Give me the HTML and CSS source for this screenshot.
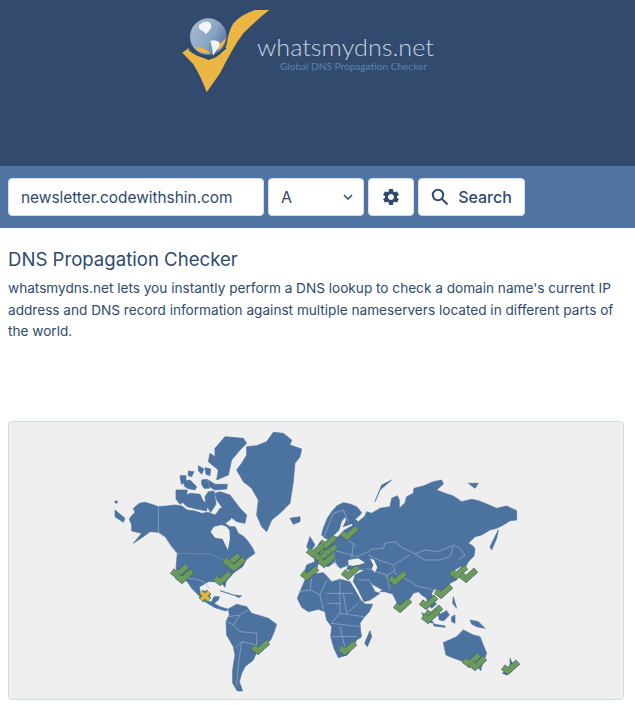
FILE: index.html
```html
<!DOCTYPE html>
<html lang="en">
<head>
    <meta charset="UTF-8">
    <meta name="viewport" content="width=device-width, initial-scale=1.0">
    <title>DNS Propagation Checker</title>
    <link rel="stylesheet" href="styles.css">
</head>
<body>
    <div class="header">
        <svg class="logo" width="265" height="100" viewBox="175 5 265 100">
            <defs>
                <linearGradient id="globe-shade" x1="0" y1="0" x2="1" y2="0.6">
                    <stop offset="0" stop-color="#a9bcd0"/>
                    <stop offset="0.65" stop-color="#8ba5c2"/>
                    <stop offset="1" stop-color="#5679a3"/>
                </linearGradient>
            </defs>
            <g transform="translate(175,5) scale(0.3333)">
                <path class="logo-check" d="M22 143L40 130Q60 150 100 165Q135 160 155 120Q160 80 175 55Q200 28 240 15L283 15Q250 40 205 85Q175 125 135 205L95 262Q78 215 55 178Z"/>
                <path class="logo-band" d="M45 130Q95 175 150 125"/>
                <circle class="logo-globe" cx="100" cy="95" r="55"/>
                <path class="logo-yellow" d="M58 125Q80 150 105 143Q95 128 58 125ZM132 118L153 100Q148 125 128 138Z"/>
                <path class="logo-land" d="M72 60Q85 48 100 50Q112 55 108 70Q100 82 92 88Q88 78 78 75Q70 72 72 60ZM106 108Q118 102 132 110Q137 122 125 135L114 152Q112 125 106 108Z"/>
            </g>
            <text class="logo-name" x="257" y="56" textLength="177" lengthAdjust="spacingAndGlyphs">whatsmydns.net</text>
            <text class="logo-tag" x="280" y="70" textLength="147" lengthAdjust="spacingAndGlyphs">Global DNS Propagation Checker</text>
        </svg>
    </div>

    <form class="search-bar">
        <input class="field domain" type="text" value="newsletter.codewithshin.com">
        <div class="type-select">
            <select class="field">
                <option>A</option>
            </select>
            <svg class="chevron" width="10" height="6" viewBox="0 0 10 6"><path d="M1 1L5 5L9 1"/></svg>
        </div>
        <button class="btn gear" type="button">
            <svg width="20" height="20" viewBox="0 0 24 24"><path d="M19.14 12.94c.04-.3.06-.61.06-.94 0-.32-.02-.64-.07-.94l2.03-1.58a.49.49 0 0 0 .12-.61l-1.92-3.32a.49.49 0 0 0-.59-.22l-2.39.96c-.5-.38-1.03-.7-1.62-.94l-.36-2.54a.48.48 0 0 0-.48-.41h-3.84c-.24 0-.43.17-.47.41l-.36 2.54c-.59.24-1.13.57-1.62.94l-2.39-.96c-.22-.08-.47 0-.59.22L2.74 8.87c-.12.21-.08.47.12.61l2.03 1.58c-.05.3-.09.63-.09.94s.02.64.07.94l-2.03 1.58a.49.49 0 0 0-.12.61l1.92 3.32c.12.22.37.29.59.22l2.39-.96c.5.38 1.03.7 1.62.94l.36 2.54c.05.24.24.41.48.41h3.84c.24 0 .44-.17.47-.41l.36-2.54c.59-.24 1.13-.56 1.62-.94l2.39.96c.22.08.47 0 .59-.22l1.92-3.32c.12-.22.07-.47-.12-.61l-2.01-1.58zM12 15.6c-1.98 0-3.6-1.62-3.6-3.6s1.62-3.6 3.6-3.6 3.6 1.62 3.6 3.6-1.62 3.6-3.6 3.6z"/></svg>
        </button>
        <button class="btn search" type="submit">
            <svg width="18" height="18" viewBox="0 0 18 18"><circle cx="7" cy="7" r="5.2"/><path d="M11 11L16.5 16.5"/></svg>
            Search
        </button>
    </form>

    <div class="intro">
        <h1>DNS Propagation Checker</h1>
        <p>whatsmydns.net lets you instantly perform a DNS lookup to check a domain name's current IP address and DNS record information against multiple nameservers located in different parts of the world.</p>
    </div>

    <div class="map-card">
        <svg class="map" width="614" height="277" viewBox="9 422 614 277">
            <defs>
                <g id="ok">
                    <path class="mark-edge" d="M-7 0L-2 4L8 -5"/>
                    <path class="mark-ok" d="M-7 0L-2 4L8 -5"/>
                </g>
                <g id="bad">
                    <path class="mark-edge" d="M-4 -4L4 4M4 -4L-4 4"/>
                    <path class="mark-ok" d="M-4 -4L4 4M4 -4L-4 4"/>
                    <path class="mark-bad" d="M-4 -4L4 4M4 -4L-4 4"/>
                </g>
            </defs>

            <!-- americas -->
            <g transform="translate(100,425) scale(0.3333)">
                <path class="land" d="M88 282L95 272L105 262L100 250L118 235L135 232L155 238L175 245L200 243L225 240L245 243L262 255L285 258L305 265L325 262L345 270L352 262L360 250L385 245L395 255L400 270L390 285L375 295L390 305L405 305L415 325L432 335L445 350L458 370L465 385L450 395L438 405L428 425L405 440L390 455L378 470L375 487L368 478L365 465L345 470L325 470L308 480L298 485L302 510L315 528L335 530L342 515L358 515L355 525L342 535L360 545L385 553L378 558L345 548L315 530L295 510L275 490L262 470L240 455L228 430L232 385L215 365L195 335L175 322L150 320L130 335L100 355L125 325L95 318L95 300Z"/>
                <path class="water" d="M332 320L342 305L365 300L380 305L388 315L390 340L384 375L375 358L368 342L345 338Z"/>
                <path class="land" d="M440 65L470 62L500 50L520 22L550 25L575 45L570 60L605 72L600 95L585 115L580 170L570 235L545 260L515 285L500 320L485 305L470 270L475 225L455 190L430 170L410 135L425 115L440 90Z"/>
                <path class="land" d="M345 70L375 35L430 40L440 55L420 75L395 105L385 150L350 165L355 135L325 110L330 85L345 95Z"/>
                <path class="land" d="M345 205L360 200L390 210L420 250L440 270L435 295L410 290L385 270L365 245L350 225Z"/>
                <path class="land" d="M228 195L262 195L258 225L240 238L228 222ZM248 215L270 205L300 208L308 225L322 240L320 258L290 252L262 245L250 235ZM255 168L270 165L290 185L285 195L262 190L252 182ZM240 152L258 152L258 172L244 178ZM265 138L282 140L275 155L265 152ZM295 122L312 132L305 148L296 138ZM315 128L332 132L330 152L318 148ZM305 165L322 163L328 190L312 190L305 178ZM325 165L345 178L382 178L380 192L345 195L328 185ZM325 200L342 198L348 238L332 262L318 240L315 215ZM570 280L600 275L600 290L580 298ZM45 255L75 280L70 292L45 275ZM45 228L52 228L52 234L45 234ZM360 497L400 510L415 515L385 505ZM405 510L425 513L415 518Z"/>
                <path class="land" d="M378 590L388 570L385 552L410 538L440 545L455 565L480 572L505 580L530 598L522 622L512 645L490 665L470 682L460 705L435 725L425 745L418 770L428 798L412 798L398 775L398 735L405 690L400 665L380 630Z"/>
                <path class="border" d="M175 245L175 322L195 335L215 365L232 385M262 460L285 462L310 470L330 490M385 575L420 570L445 555M420 570L400 600L420 620L470 625L470 680M400 600L380 590M405 670L425 650L470 660M425 650L415 720L410 780"/>
                <path class="border dotted" d="M235 385L330 387L370 405L385 400"/>
            </g>

            <!-- europe, africa, asia, oceania -->
            <g transform="translate(290,480) scale(0.3333)">
                <path class="land" d="M95 165L100 145L112 115L125 95L140 78L160 68L180 72L200 80L215 98L207 108L195 118L205 125L225 108L230 95L245 100L270 85L300 80L305 55L322 47L328 60L328 85L345 68L350 50L370 40L372 25L400 18L430 5L455 0L460 12L440 30L465 40L490 48L515 65L545 58L565 62L590 72L620 85L650 78L680 92L680 120L660 122L640 135L620 145L600 150L575 165L555 170L535 190L545 195L555 205L552 228L535 245L525 265L510 260L495 270L490 285L500 300L480 310L470 330L455 345L445 340L435 325L425 340L432 365L440 372L425 385L415 375L410 355L395 345L385 335L370 340L360 355L348 382L335 392L322 370L308 342L285 335L270 335L278 330L250 315L238 302L255 335L270 340L240 360L222 365L205 330L190 305L195 285L225 270L195 268L170 270L175 255L150 265L135 245L115 260L100 255L85 250L80 270L60 290L40 285L50 255L75 245L70 225L80 205L105 195L125 180L105 175Z"/>
                <path class="water" d="M130 168L148 150L155 125L165 112L168 120L158 142L185 132L188 136L162 150L143 170ZM175 240L205 235L225 248L205 255L190 258L175 255ZM240 235L252 240L262 262L255 278L245 268L250 255Z"/>
                <path class="land" d="M22 355L45 300L70 282L100 278L112 290L125 305L150 298L180 305L195 330L212 360L225 372L248 373L238 395L222 412L210 430L212 455L215 470L200 480L190 500L172 525L145 533L132 505L122 470L125 440L110 420L105 395L85 388L55 395L35 382Z"/>
                <path class="land" d="M240 452L245 470L232 500L224 490ZM60 170L75 195L60 215L50 200ZM5 118L30 115L15 130ZM255 65L275 15L305 0L270 30ZM535 10L565 10L555 25ZM600 200L625 150L620 175L605 210ZM395 398L415 410L432 430L422 428L400 410ZM445 405L470 392L478 405L462 422L448 420ZM540 420L565 425L585 445L560 440L545 432ZM430 432L465 438L465 442L432 438ZM485 410L495 405L495 430L485 425ZM490 350L500 385L488 370ZM565 563L575 563L572 572Z"/>
                <path class="land" d="M460 488L500 470L520 450L550 465L570 470L590 520L575 560L550 565L520 545L480 530L468 525Z"/>
                <path class="land" d="M660 535L675 565L650 585L637 580L660 560Z"/>
                <path class="border" d="M100 175L130 100L160 90L175 125M25 335L60 330L90 345L110 300M60 330L65 295M90 345L100 388M110 340L190 340M150 300L150 400L125 430M150 400L220 410M125 470L200 470M160 340L170 400M110 370L150 370M125 430L210 440M170 400L205 370M150 440L170 525M235 215L245 208L280 205L285 190L315 185L340 205L375 222L405 210L445 215L480 200L490 195L510 205L525 225L505 240M375 222L405 240L450 240L480 230L490 200M235 225L265 240L310 255L360 225M310 255L315 280L345 295L385 320L415 325L440 335M285 290L310 275M230 265L290 285L300 330M205 300L240 300M130 210L200 230L235 215M150 160L200 200M90 210L130 250M130 215L140 260M190 190L185 235"/>
            </g>

            <use href="#ok" x="179" y="571"/>
            <use href="#ok" x="184" y="576"/>
            <use href="#ok" x="231" y="560"/>
            <use href="#ok" x="236" y="564"/>
            <use href="#ok" x="222" y="578"/>
            <use href="#ok" x="260" y="647"/>
            <use href="#bad" x="205" y="596"/>
            <use href="#ok" x="349" y="533"/>
            <use href="#ok" x="327" y="542"/>
            <use href="#ok" x="315" y="550"/>
            <use href="#ok" x="328" y="551"/>
            <use href="#ok" x="322" y="555"/>
            <use href="#ok" x="326" y="560"/>
            <use href="#ok" x="309" y="573"/>
            <use href="#ok" x="350" y="572"/>
            <use href="#ok" x="397" y="578"/>
            <use href="#ok" x="458" y="572"/>
            <use href="#ok" x="468" y="575"/>
            <use href="#ok" x="443" y="591"/>
            <use href="#ok" x="428" y="602"/>
            <use href="#ok" x="402" y="605"/>
            <use href="#ok" x="433" y="612"/>
            <use href="#ok" x="430" y="616"/>
            <use href="#ok" x="347" y="648"/>
            <use href="#ok" x="471" y="660"/>
            <use href="#ok" x="477" y="663"/>
            <use href="#ok" x="510" y="667"/>
        </svg>
    </div>
</body>
</html>
```

FILE: styles.css
```css
body {
    margin: 0;
    font-family: 'Inter', 'Liberation Sans', sans-serif;
    color: #2f4a6d;
    background-color: #ffffff;
}
.header {
    height: 166px;
    background-color: #324a6d;
    padding-left: 175px;
    padding-top: 5px;
    box-sizing: border-box;
}
.logo {
    display: block;
}
.logo-check {
    fill: #ebb644;
}
.logo-band {
    fill: none;
    stroke: #324a6d;
    stroke-width: 14;
}
.logo-globe {
    fill: url(#globe-shade);
}
.logo-yellow {
    fill: #ebb644;
}
.logo-land {
    fill: #f2f5f8;
}
.logo-name {
    font-family: 'Lato', sans-serif;
    font-weight: 300;
    font-size: 24px;
    fill: #c6d4e2;
}
.logo-tag {
    font-family: 'Lato', sans-serif;
    font-size: 9px;
    fill: #5b82b0;
}
.search-bar {
    display: flex;
    gap: 4px;
    height: 62px;
    box-sizing: border-box;
    margin: 0;
    padding: 12px 8px;
    background-color: #4f74a1;
}
.field,
.btn {
    height: 38px;
    box-sizing: border-box;
    border: 1px solid #d5dde6;
    border-radius: 4px;
    background-color: #ffffff;
    color: #2f4a6d;
    font-family: inherit;
    font-size: 16px;
}
.domain {
    width: 256px;
    padding: 0 12px;
    font-size: 15.4px;
}
.type-select {
    position: relative;
    width: 96px;
}
.type-select select {
    width: 100%;
    padding: 0 12px;
    appearance: none;
}
.chevron {
    position: absolute;
    right: 11px;
    top: 16px;
}
.chevron path {
    fill: none;
    stroke: #2f4a6d;
    stroke-width: 1.5;
}
.btn {
    display: flex;
    align-items: center;
    justify-content: center;
    font-weight: 500;
}
.gear {
    width: 46px;
    padding: 0;
}
.gear svg {
    fill: #2f4a6d;
}
.search {
    width: 107px;
    gap: 9px;
    padding: 0;
}
.search svg {
    fill: none;
    stroke: #2f4a6d;
    stroke-width: 2;
}
.intro {
    padding: 0 8px;
    height: 193px;
}
.intro h1 {
    margin: 0;
    padding-top: 19px;
    font-size: 18.6px;
    line-height: 24px;
    font-weight: 400;
}
.intro p {
    margin: 7px 0 0;
    font-size: 13.62px;
    line-height: 21.5px;
}
.map-card {
    width: 616px;
    height: 279px;
    margin-left: 8px;
    box-sizing: border-box;
    border: 1px solid #d3d9e0;
    border-radius: 4px;
    background-color: #efefef;
}
.map {
    display: block;
}
.land {
    fill: #4c72a0;
    stroke: #4c72a0;
    stroke-width: 2;
    stroke-linejoin: round;
}
.water {
    fill: #efefef;
}
.border {
    fill: none;
    stroke: #9db1c8;
    stroke-width: 2;
}
.dotted {
    stroke-dasharray: 4 4;
}
.mark-edge {
    fill: none;
    stroke: #2f4a6d;
    stroke-width: 6.2;
}
.mark-ok {
    fill: none;
    stroke: #6b9a5c;
    stroke-width: 5.5;
}
.mark-bad {
    fill: none;
    stroke: #ebb644;
    stroke-width: 3;
}
```
